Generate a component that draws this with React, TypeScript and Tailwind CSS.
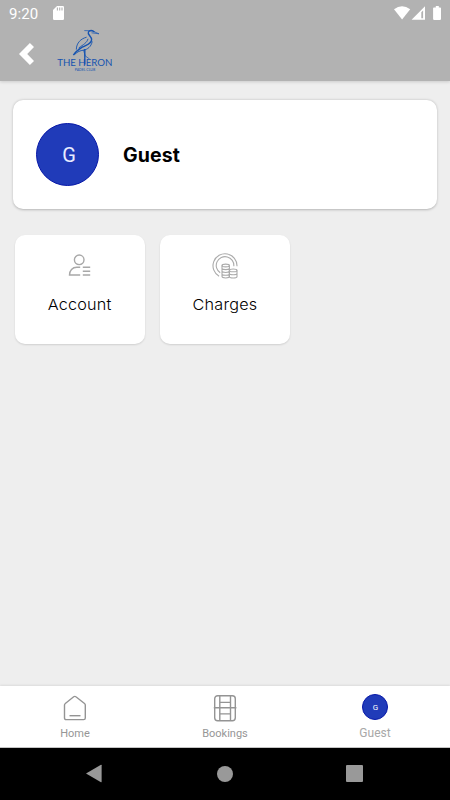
import type { ReactNode } from 'react';

const roboto = "font-['Roboto',sans-serif]";

function HeronLogo() {
  return (
    <svg width="62" height="48" viewBox="0 0 62 48" className="block" fill="none" stroke="#1553b0">
      <path d="M39.4 6.1C37.7 4 34.5 3.9 33.4 6c-1.3 2.5 3.2 4.4 3.2 7.5 0 4.8-5.6 5.4-9.4 7.7-2.9 1.8-6.4 4.2-8.8 8" strokeWidth="1.4" />
      <path d="M29.3 4.6l7.6.2L44 7.8l-7.5-1" strokeWidth=".7" />
      <path d="M31.6 11.2c-5.6 1.5-10.1 5.4-10.3 12.4M33 12.8c-1 4-4.6 5.7-9.3 9.2M37.2 15.4c-.9 5.3-4.8 8.1-8.7 8.8-3.5.5-5.6 1.2-8.8 4.2" strokeWidth=".9" />
      <path d="M29.8 23V38.6" strokeWidth="1.4" />
      <path d="M28.4 23.7l1.8 6.2 4.4 3.1" strokeWidth=".7" />
      <g fill="#1553b0" stroke="none" fontFamily="Lato, sans-serif">
        <text x="2.2" y="39.6" fontSize="10" textLength="55.3" lengthAdjust="spacingAndGlyphs">THE HERON</text>
        <text x="19.8" y="45" fontSize="3.6" textLength="20.4" lengthAdjust="spacingAndGlyphs">PADEL CLUB</text>
      </g>
    </svg>
  );
}

function StatusBar() {
  return (
    <div className="flex h-[27px] items-center pl-[9px] pr-[8px] text-white">
      <span className="w-[30px] pt-px text-[15px] leading-[26px] tracking-[0.1px]">9:20</span>
      <svg width="11" height="14" viewBox="0 0 11 14" className="-mt-px ml-[14px]">
        <path d="M4 0h5.8Q11 0 11 1.2v11.6Q11 14 9.8 14H1.2Q0 14 0 12.8V4z" fill="#fff" />
        <path d="M4.4 1.5v3M6.7 1.5v3M9 1.5v3" stroke="#b2b2b2" strokeWidth="1.1" />
      </svg>
      <svg width="49" height="16" viewBox="0 0 49 16" className="-mt-px ml-auto">
        <path d="M1 4.3Q9-1.6 17.2 4.3L9.1 14.5z" fill="#fff" />
        <path d="M18.6 14.7L32 1.3v13.4z" fill="#fff" />
        <path d="M28.3 7.3v6h1.8V5.5z" fill="#b2b2b2" />
        <path d="M40.9 2.5h1.9V1.1h3v1.4h1.4q.8 0 .8.8v10.8q0 .8-.8.8h-6.3q-.8 0-.8-.8V3.3q0-.8.8-.8z" fill="#fff" />
      </svg>
    </div>
  );
}

function AccountIcon() {
  return (
    <svg width="24" height="24" viewBox="0 0 24 24" className="-ml-[2px] -mt-[2px]" fill="none" stroke="#a8a8a8" strokeWidth="1.4">
      <circle cx="12.2" cy="6.8" r="4.8" />
      <path d="M13.2 14.3H9.8C5.4 14.3 2.5 17.4 2.5 22h10.7M15.8 14.3h7.4M15.8 18.2h7.4M15.8 22h7.4" />
    </svg>
  );
}

function ChargesIcon() {
  return (
    <svg width="26" height="26" viewBox="0 0 26 26" className="-mt-px -ml-px" fill="none" stroke="#ababab" strokeWidth="1.1">
      <path d="M7.1 23.2A12 12 0 1 1 25 13.2M8.2 19.8a8.8 8.8 0 1 1 13.6-6.5" />
      <ellipse cx="13.7" cy="12.5" rx="3.7" ry="1.4" />
      <path d="M10 12.5v11.1c0 1.8 7.4 1.8 7.4 0V12.5M10 15.3c0 1.8 7.4 1.8 7.4 0M10 18.1c0 1.8 7.4 1.8 7.4 0M10 20.9c0 1.8 7.4 1.8 7.4 0" />
      <ellipse cx="21.2" cy="17.4" rx="3.8" ry="1.4" />
      <path d="M17.4 17.4v6.3c0 1.7 7.6 1.7 7.6 0v-6.3M17.4 20.5c0 1.7 7.6 1.7 7.6 0" />
    </svg>
  );
}

function Tile({ icon, label }: { icon: ReactNode; label: string }) {
  return (
    <div className="flex h-[109px] w-[130px] flex-col items-center rounded-[10px] bg-white shadow-[0_1px_2px_rgba(0,0,0,0.13)]">
      <div className="mt-[17px] flex h-[28px] items-center justify-center">{icon}</div>
      <div className="mt-[14.5px] scale-x-[1.08] whitespace-nowrap font-['Inter',sans-serif] text-[15px] font-light leading-[20px] tracking-[0.2px] text-black">
        {label}
      </div>
    </div>
  );
}

export default function App() {
  return (
    <div className={`flex h-[800px] w-[450px] flex-col overflow-hidden bg-[#eeeeee] ${roboto}`}>
      <header className="h-[81px] shrink-0 bg-[#b2b2b2] shadow-[0_1px_3px_rgba(0,0,0,0.15)]">
        <StatusBar />
        <div className="flex items-start pl-[19px]">
          <svg width="15" height="22" viewBox="0 0 15 22" className="mt-[15.5px]">
            <path d="M10.9 0L15 4.1 8.2 11 15 17.9 10.9 22 0 11z" fill="#fff" />
          </svg>
          <div className="-mt-px ml-[21px]">
            <HeronLogo />
          </div>
        </div>
      </header>

      <main className="flex-1 px-[13px] pt-[19px]">
        <section className="flex h-[109px] items-center rounded-[10px] bg-white pl-[23px] shadow-[0_0.5px_2.5px_rgba(0,0,0,0.24)]">
          <div className="flex size-[63px] items-center justify-center rounded-full border border-[#0718a8] bg-[#203bb9] text-[20px] leading-none text-[#e8ecff]">
            <span className="pl-[3px] pt-px">G</span>
          </div>
          <h1 className="ml-[24px] pt-px font-['Inter',sans-serif] text-[19.5px] font-bold leading-[26px] tracking-[0.1px] text-black">Guest</h1>
        </section>
        <div className="mt-[26px] flex gap-[15px] pl-[2px]">
          <Tile icon={<AccountIcon />} label="Account" />
          <Tile icon={<ChargesIcon />} label="Charges" />
        </div>
      </main>

      <nav className="flex h-[62px] shrink-0 border-b border-[#c4c4c4] bg-white text-[#969696] shadow-[0_-1px_2px_rgba(0,0,0,0.08)]">
        <div className="flex flex-1 flex-col items-center">
          <svg width="24" height="28" viewBox="0 0 24 28" className="mt-[9px]" fill="none" stroke="#949494" strokeWidth="1.4" strokeLinejoin="round">
            <path d="M1.5 10.1q0-1 .8-1.6l8.4-6.7q1.1-.9 2.2 0l8.6 6.7q.8.6.8 1.6v12.8q0 1.7-1.7 1.7H3.2q-1.7 0-1.7-1.7z" />
            <path d="M6.5 20.7h11" />
          </svg>
          <span className="mt-[3px] text-[11px] leading-[16px]">Home</span>
        </div>
        <div className="flex flex-1 flex-col items-center">
          <svg width="24" height="28" viewBox="0 0 24 28" className="mt-[9px]" fill="none" stroke="#949494" strokeWidth="1.4">
            <rect x="1.7" y=".7" width="20.6" height="25" rx="3" />
            <path d="M.8 12.8h22.6M6.8.7v25M17.5.7v25M6.8 7.4h10.7M6.8 18.9h10.7" />
          </svg>
          <span className="mt-[3px] text-[11px] leading-[16px]">Bookings</span>
        </div>
        <div className="flex flex-1 flex-col items-center">
          <div className="mt-[8px] flex size-[26px] items-center justify-center rounded-full border border-[#0718a8] bg-[#203bb9] pl-px pt-px text-[8px] leading-none text-white">
            G
          </div>
          <span className="mt-[5px] text-[12px] leading-[16px] text-[#a8a8a8]">Guest</span>
        </div>
      </nav>

      <footer className="flex h-[52px] shrink-0 items-center bg-black">
        <svg width="16" height="19" viewBox="0 0 16 19" className="-mt-px ml-[86px]" fill="#999">
          <path d="M0 9.5L15 .8q.6-.3.6.4v16.6q0 .7-.6.4z" />
        </svg>
        <div className="ml-[115px] size-[16px] rounded-full bg-[#999]" />
        <div className="-mt-px ml-[113px] size-[17px] rounded-[1px] bg-[#999]" />
      </footer>
    </div>
  );
}
